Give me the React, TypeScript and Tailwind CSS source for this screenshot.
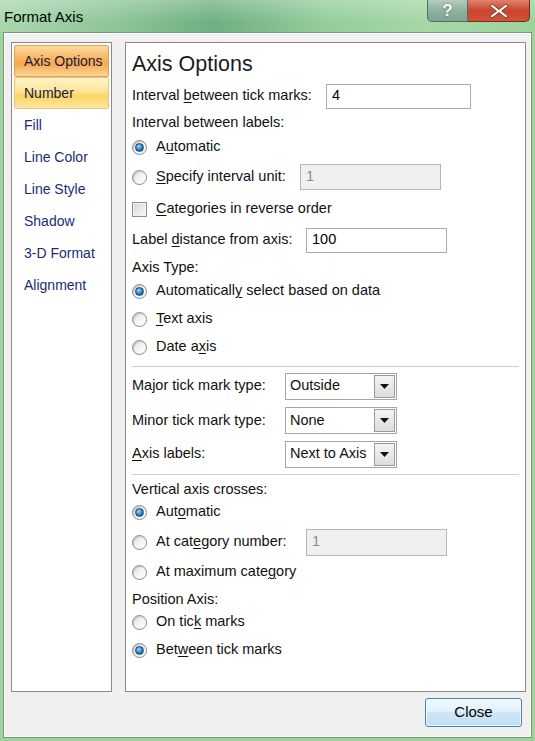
import React from "react";

const FONT = { fontFamily: '"Liberation Sans", Arial, sans-serif' };

function Radio({ checked }: { checked?: boolean }) {
  return (
    <span className="relative flex h-[15px] w-[15px] shrink-0 items-center justify-center rounded-full border border-[#8a8a8a] bg-[linear-gradient(135deg,#e0e0e0,#f7f7f7_60%,#ffffff)] shadow-[inset_1px_1px_1px_rgba(0,0,0,0.15)]">
      {checked && (
        <span className="h-[9px] w-[9px] rounded-full border border-[#1d4a72] bg-[radial-gradient(circle_at_40%_35%,#9fe3ff_0%,#2a8fd0_45%,#0d3f78_100%)]" />
      )}
    </span>
  );
}

function Checkbox() {
  return (
    <span className="h-[15px] w-[15px] shrink-0 border border-[#8e8f8f] bg-[linear-gradient(135deg,#d4d4d4,#ececec_60%,#f6f6f6)] shadow-[inset_0_0_0_1px_#f4f4f4]" />
  );
}

function U({ children }: { children: React.ReactNode }) {
  return <span className="underline decoration-1 underline-offset-2">{children}</span>;
}

function TextBox({ value, disabled, w, h = 25 }: { value: string; disabled?: boolean; w: number; h?: number }) {
  return (
    <div
      className={`flex items-center border pl-[5px] ${disabled ? "border-[#b7b7b7] bg-[#f0f0f0] text-[#8a8a8a]" : "border-[#ababab] bg-white text-black"}`}
      style={{ width: w, height: h }}
    >
      {value}
    </div>
  );
}

function Select({ value }: { value: string }) {
  return (
    <div className="flex h-[27px] w-[112px] items-stretch border border-[#a5a5a5] bg-white">
      <div className="flex flex-1 items-center pl-[4px] whitespace-nowrap overflow-hidden">{value}</div>
      <div className="m-[1px] flex w-[21px] items-center justify-center border border-[#9a9a9a] bg-[linear-gradient(#f4f4f4,#dcdcdc)]">
        <svg width="9" height="5" viewBox="0 0 9 5">
          <path d="M0 0H9L4.5 5Z" fill="#111" />
        </svg>
      </div>
    </div>
  );
}

function Row({ h, children }: { h: number; children?: React.ReactNode }) {
  return (
    <div className="flex items-center whitespace-nowrap" style={{ height: h }}>
      {children}
    </div>
  );
}

function RadioRow({ h, checked, children }: { h: number; checked?: boolean; children: React.ReactNode }) {
  return (
    <Row h={h}>
      <Radio checked={checked} />
      <span className="ml-[9px]">{children}</span>
    </Row>
  );
}

function Sep() {
  return <div className="h-px w-[387px] bg-[#d0d0d0]" />;
}

const navItems = ["Fill", "Line Color", "Line Style", "Shadow", "3-D Format", "Alignment"];

export default function App() {
  return (
    <div
      className="relative h-[741px] w-[535px] overflow-hidden bg-[#9cd59c] text-[14.5px] text-[#111]"
      style={FONT}
    >
      {/* Title bar */}
      <div className="relative flex h-[32px] items-start bg-[linear-gradient(90deg,#a9d8ae_0%,#8fc79a_20%,#6faf82_40%,#93cc9c_60%,#a6d7a6_80%,#9bd39b_100%)]">
        <div className="absolute inset-0 bg-[linear-gradient(180deg,rgba(255,255,255,0.25),rgba(255,255,255,0)_70%)]" />
        <span className="relative ml-[4px] mt-[6px] text-[15px] text-black">Format Axis</span>
        <div className="relative ml-auto mr-[5px] flex h-[22px]">
          <div className="flex w-[41px] items-center justify-center rounded-bl-[5px] border border-t-0 border-[#4f6f5f] bg-[linear-gradient(#b5cdbf,#8fb29f_50%,#7ea592)] text-[17px] font-bold text-white [text-shadow:0_0_2px_#4a5a50]">
            ?
          </div>
          <div className="flex w-[62px] items-center justify-center rounded-br-[5px] border border-l-0 border-t-0 border-[#7a2a1a] bg-[linear-gradient(#e0836f,#c9442c_50%,#d2533a)]">
            <svg width="20" height="16" viewBox="0 0 20 16">
              <path d="M3 1 L10 6.5 L17 1 L19 3 L12.5 8 L19 13 L17 15 L10 9.5 L3 15 L1 13 L7.5 8 L1 3 Z" fill="#fff" stroke="#6a2a1a" strokeWidth="0.8" />
            </svg>
          </div>
        </div>
      </div>

      {/* Body */}
      <div className="mx-[3px] flex h-[706px] flex-col border border-[#7d957d] bg-[#f0f0f0] shadow-[inset_0_0_0_1px_#ffffff]">
        <div className="mt-[9px] flex gap-[13px] pl-[7px]">
          {/* Left nav */}
          <div className="flex h-[650px] w-[101px] flex-col border border-[#8a8a8a] bg-white p-[2px] text-[14px] text-[#1c2a78]">
            <div className="flex h-[32px] items-center rounded-[2px] border border-[#e3a14a] bg-[linear-gradient(#fcdca0,#f8b25e_45%,#f6a94e_60%,#fbd59a)] pl-[9px] text-[#1a1a40]">
              Axis Options
            </div>
            <div className="flex h-[32px] items-center rounded-[2px] border border-[#e9c57a] bg-[linear-gradient(#fff4c8,#fde49a_45%,#fbd460_60%,#fde7a6)] pl-[9px] text-[#1a1a40]">
              Number
            </div>
            {navItems.map((t) => (
              <div key={t} className="flex h-[32px] items-center pl-[10px]">
                {t}
              </div>
            ))}
          </div>

          {/* Right panel */}
          <div className="flex h-[650px] w-[401px] flex-col border border-[#8a8a8a] bg-white pl-[6px] pt-[3px]">
            <Row h={36}>
              <span className="text-[21.5px] text-[#1a1a1a]">Axis Options</span>
            </Row>
            <Row h={28}>
              <span className="w-[194px]">
                Interval <U>b</U>etween tick marks:
              </span>
              <TextBox value="4" w={145} />
            </Row>
            <Row h={26}>Interval between labels:</Row>
            <RadioRow h={22} checked>
              A<U>u</U>tomatic
            </RadioRow>
            <Row h={38}>
              <Radio />
              <span className="ml-[9px] w-[144px]">
                <U>S</U>pecify interval unit:
              </span>
              <TextBox value="1" disabled w={141} h={26} />
            </Row>
            <Row h={26}>
              <Checkbox />
              <span className="ml-[9px]">
                <U>C</U>ategories in reverse order
              </span>
            </Row>
            <Row h={36}>
              <span className="w-[174px]">
                Label <U>d</U>istance from axis:
              </span>
              <TextBox value="100" w={141} />
            </Row>
            <Row h={20}>Axis Type:</Row>
            <RadioRow h={26} checked>
              Automaticall<U>y</U> select based on data
            </RadioRow>
            <RadioRow h={30}>
              <U>T</U>ext axis
            </RadioRow>
            <RadioRow h={26}>
              Date a<U>x</U>is
            </RadioRow>
            <div className="h-[6px]" />
            <Sep />
            <Row h={38}>
              <span className="w-[153px]">Major tick mark type:</span>
              <Select value="Outside" />
            </Row>
            <Row h={31}>
              <span className="w-[153px]">Minor tick mark type:</span>
              <Select value="None" />
            </Row>
            <Row h={36}>
              <span className="w-[153px]">
                <U>A</U>xis labels:
              </span>
              <Select value="Next to Axis" />
            </Row>
            <div className="h-[2px]" />
            <Sep />
            <Row h={30}>Vertical axis crosses:</Row>
            <RadioRow h={14} checked>
              Aut<U>o</U>matic
            </RadioRow>
            <Row h={46}>
              <Radio />
              <span className="ml-[9px] w-[150px]">
                At cat<U>e</U>gory number:
              </span>
              <TextBox value="1" disabled w={141} h={27} />
            </Row>
            <RadioRow h={14}>
              At maximum cate<U>g</U>ory
            </RadioRow>
            <Row h={42}>Position Axis:</Row>
            <RadioRow h={2}>
              On tic<U>k</U> marks
            </RadioRow>
            <RadioRow h={54} checked>
              Bet<U>w</U>een tick marks
            </RadioRow>
          </div>
        </div>

        {/* Button row */}
        <div className="mt-[6px] flex justify-end pr-[9px]">
          <button className="flex h-[29px] w-[97px] items-center justify-center rounded-[3px] border border-[#3d86b8] bg-[linear-gradient(#f2f9fd,#e3f1fa_45%,#cfe7f6_50%,#bcdff4)] text-[15px] text-black shadow-[inset_0_0_0_1px_rgba(255,255,255,0.7)]">
            Close
          </button>
        </div>
      </div>
    </div>
  );
}
